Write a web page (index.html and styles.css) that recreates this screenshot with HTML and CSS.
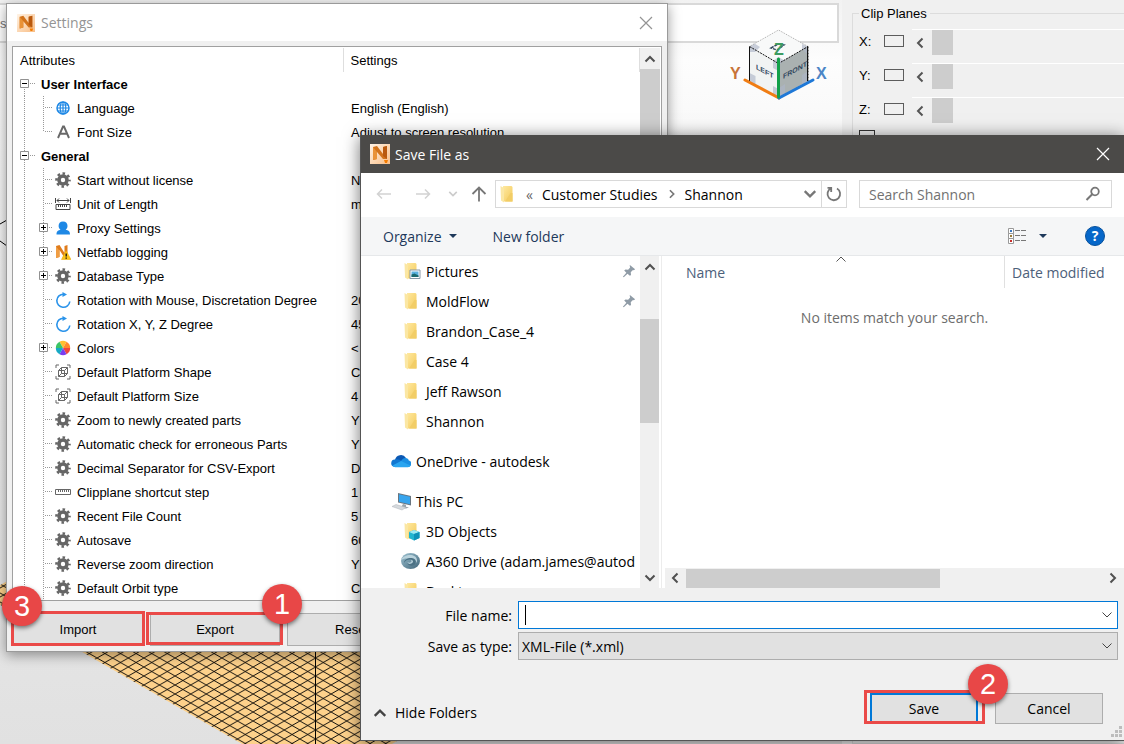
FILE: index.html
```html
<!DOCTYPE html>
<html lang="en">
<head>
<meta charset="utf-8">
<title>Netfabb Settings</title>
<link rel="stylesheet" href="styles.css">
</head>
<body>
<svg class="sprite" aria-hidden="true">
  <defs>
    <linearGradient id="fold" x1="0" y1="0" x2="1" y2="1"><stop offset="0" stop-color="#ffe9a0"/><stop offset="1" stop-color="#f3ca5b"/></linearGradient>
    <linearGradient id="tile" x1="0" y1="0" x2="1" y2="1"><stop offset="0" stop-color="#fff3e6"/><stop offset="1" stop-color="#f8bd85"/></linearGradient>
    <linearGradient id="swirl" x1="0" y1="0" x2="1" y2="1"><stop offset="0" stop-color="#9fc3d2"/><stop offset="1" stop-color="#3f6478"/></linearGradient>
  </defs>
  <symbol id="g-first" viewBox="0 0 42 24"><path d="M11.500 17V24M17 11.500H22" stroke="#999" stroke-dasharray="1 1"/><path d="M7.500 7.500h8v8h-8z" fill="#fff" stroke="#919191"/><path d="M9 11.500h5" stroke="#000"/></symbol>
  <symbol id="g-root" viewBox="0 0 42 24"><path d="M11.500 0V24M17 11.500H22" stroke="#999" stroke-dasharray="1 1"/><path d="M7.500 7.500h8v8h-8z" fill="#fff" stroke="#919191"/><path d="M9 11.500h5" stroke="#000"/></symbol>
  <symbol id="g-leaf" viewBox="0 0 42 24"><path d="M11.500 0V24M30.500 0V24M32 11.500H40" stroke="#999" stroke-dasharray="1 1"/></symbol>
  <symbol id="g-last" viewBox="0 0 42 24"><path d="M11.500 0V24M30.500 0V12M32 11.500H40" stroke="#999" stroke-dasharray="1 1"/></symbol>
  <symbol id="g-plus" viewBox="0 0 42 24"><path d="M11.500 0V24M30.500 0V24M36 11.500H40" stroke="#999" stroke-dasharray="1 1"/><path d="M26.500 7.500h8v8h-8z" fill="#fff" stroke="#919191"/><path d="M28 11.500h5M30.500 9v5" stroke="#000"/></symbol>

  <symbol id="i-gear" viewBox="0 0 16 16"><g fill="none" stroke="#666"><circle cx="8" cy="8" r="4" stroke-width="3.600"/><circle cx="8" cy="8" r="6.500" stroke-width="2.600" stroke-dasharray="2.550 2.555" stroke-dashoffset="1.275"/></g></symbol>
  <symbol id="i-globe" viewBox="0 0 16 16"><circle cx="8" cy="8" r="6" fill="#fff" stroke="#1e88e5" stroke-width="1.500"/><ellipse cx="8" cy="8" rx="2.800" ry="6" fill="none" stroke="#1e88e5" stroke-width="1.200"/><path d="M8 2v12M2 8h12M3 5h10M3 11h10" stroke="#1e88e5" stroke-width="1.200"/></symbol>
  <symbol id="i-font" viewBox="0 0 16 16"><path d="M3 14L8 2.500h1L14 14M5 9.800h7" fill="none" stroke="#686868" stroke-width="1.900"/></symbol>
  <symbol id="i-length" viewBox="0 0 16 16"><path d="M.500 2v5M15.500 2v5M2 4.500h12M4 2.500l-2 2 2 2M12 2.500l2 2-2 2M1 8.500h14v5H1zM3.500 9v2M5.500 9v2M7.500 9v2M9.500 9v2M11.500 9v2" fill="none" stroke="#444"/></symbol>
  <symbol id="i-user" viewBox="0 0 16 16"><path d="M8 1.500c3 0 4.500 2 4.500 4.500 0 1.700-.800 3-1.800 3.800C13 10.300 15 11 15 14.500H1.500c0-3.500 2-4.200 4-4.700C4.500 9 3.600 7.700 3.600 6 3.600 3.500 5 1.500 8 1.500z" fill="#1e88e5"/></symbol>
  <symbol id="i-netlog" viewBox="0 0 16 16"><path d="M1 14V2l3.500-1 5 8V2l3-1v12H9L4.500 6v7z" fill="#df7c1c"/><path d="M1 14V2l3.500 5v6z" fill="#f09d43"/><path d="M11 6.500L16 15.500H6.500z" fill="#fcc419" stroke="#e8a800" stroke-width=".500"/><path d="M11.200 9.500v3M11.200 13.500v1.200" stroke="#111" stroke-width="1.300"/></symbol>
  <symbol id="i-rotate" viewBox="0 0 16 16"><path d="M14.800 9.500A6.500 6.500 0 1 1 8.500 2.200" fill="none" stroke="#2a93ea" stroke-width="1.600"/><path d="M7.500 0L12 2.500 7.500 5z" fill="#2a93ea"/></symbol>
  <symbol id="i-colors" viewBox="0 0 16 16"><path d="M8 8L4.500 1.800a7.200 7.200 0 0 1 7 0z" fill="#ffc02e"/><path d="M8 8l3.500-6.200A7.200 7.200 0 0 1 15.200 8z" fill="#ff8a2a"/><path d="M8 8h7.200a7.200 7.200 0 0 1-3.700 6.200z" fill="#f0453c"/><path d="M8 8l3.500 6.200a7.200 7.200 0 0 1-7 0z" fill="#7a3cf0"/><path d="M8 8l-3.500 6.200A7.200 7.200 0 0 1 .800 8z" fill="#17a9c4"/><path d="M8 8H.800a7.200 7.200 0 0 1 3.700-6.200z" fill="#3cc466"/></symbol>
  <symbol id="i-cube" viewBox="0 0 16 16"><path d="M4 1H1v3M12 1h3v3M4 15H1v-3M12 15h3v-3M3.500 6.500h6v6h-6zM6.500 3.500h6v6h-6zM3.500 6.500l3-3M9.500 6.500l3-3M9.500 12.500l3-3M3.500 12.500l3-3" fill="none" stroke="#666"/></symbol>
  <symbol id="i-ruler" viewBox="0 0 16 16"><path d="M.500 5.500h15v5H.500zM3.500 6v2M5.500 6v2M7.500 6v2M9.500 6v2M11.500 6v2M13.500 6v2" fill="none" stroke="#666"/></symbol>

  <symbol id="i-app" viewBox="0 0 20 20"><path d="M0 0h20v20H0z" fill="url(#tile)"/><path d="M3 16V3l4-1 6 8V3l4-1v13h-4L7 8v7z" fill="#d2731b"/><path d="M3 16V3l4 5v7z" fill="#e99237"/><path d="M13 3l4-1v13l-4-3z" fill="#b9590e"/><path d="M14 16h4l-1 3h-2z" fill="#f57c00"/></symbol>
  <symbol id="i-folder" viewBox="0 0 20 20"><path d="M5 2h8.500l1 1v14.500H5z" fill="url(#fold)"/><path d="M2.500 2L6 4v14.500L3 16.500z" fill="#fbe7a4"/><path d="M12.500 9h2v8.500H7z" fill="#f2cd66"/></symbol>
  <symbol id="i-pictures" viewBox="0 0 20 20"><use href="#i-folder"/><path d="M8 9h10v8.500H8z" fill="#fff" stroke="#8798a8"/><path d="M9.500 10.500h7v5.500h-7z" fill="#5ab0e0"/><path d="M9.500 16v-2.500l3-1 4 2V16z" fill="#1d6a70"/></symbol>
  <symbol id="i-3d" viewBox="0 0 20 20"><use href="#i-folder"/><path d="M7 11l5-2 5.500 2v6L12 19.500 7 17z" fill="#21b5d0"/><path d="M7 11l5-2 5.500 2L12 13z" fill="#9be8f2"/><path d="M12 13l5.500-2v6L12 19.500z" fill="#0d91b8"/></symbol>
  <symbol id="i-cloud" viewBox="0 0 20 20"><path d="M4 9a6 6 0 0 1 11-2l-3 5-8 1z" fill="#0a58b4"/><path d="M4.500 8.500c2-.800 4 .200 6 1.500l3 6H3.500A3.700 3.700 0 0 1 4.500 8.500z" fill="#1177d1"/><path d="M10 10c1.500-2.500 3-3.300 5-3 2 .300 2.500 1.500 2.800 2.500A3.300 3.300 0 0 1 17 16H9z" fill="#1a8fe3"/><path d="M1.500 14.500L10 10l9.500 4.500A3 3 0 0 1 17 16.200H4.200a4 4 0 0 1-2.700-1.700z" fill="#2aa5f0"/></symbol>
  <symbol id="i-pc" viewBox="0 0 20 20"><path d="M7 2l13 3v9.500L7 11.500z" fill="#687580"/><path d="M8 3.200l11 2.600v7.400L8 10.700z" fill="#37a5ee"/><path d="M12 13l3 .800v2l3 .800-3 1-5-1z" fill="#9aa4ac"/><path d="M1 15.500l4-2 10 3-4 2.500z" fill="#d5d9dd" stroke="#aeb5ba" stroke-width=".500"/></symbol>
  <symbol id="i-a360" viewBox="0 0 20 20"><ellipse cx="9.500" cy="10" rx="9.500" ry="8" fill="url(#swirl)"/><path d="M0 9c3-6 15-7 16 0 .500 5-9 6-9.500 2 1.500 1.500 4 .500 4-1 0-3-6-3-10.500-1z" fill="#b9d2dc"/><path d="M3 12c0-6 12-7 12-1 0 4-7 5-8.500 1.500 2 1 5.500 0 5.500-2 0-3-7-3-9 1.500z" fill="#4b7184"/></symbol>
  <symbol id="i-pin" viewBox="0 0 16 16"><path d="M9 1l6 5-1.500 1-1-.200L10 9.500l.300 3L9 13.500 6.300 11 2 15l-1-.500 4-4.500L2.500 7.500 4 6.300l3 .200L9.300 4 8.800 2z" fill="#8f9ba6"/></symbol>
  <symbol id="c-down" viewBox="0 0 12 12"><path d="M1.500 3.500L6 8l4.500-4.500" fill="none" stroke="currentColor" stroke-width="var(--w,2)"/></symbol>
  <symbol id="c-up" viewBox="0 0 12 12"><path d="M1.500 8.500L6 4l4.500 4.500" fill="none" stroke="currentColor" stroke-width="var(--w,2)"/></symbol>
  <symbol id="c-left" viewBox="0 0 12 12"><path d="M8.500 1.500L4 6l4.500 4.500" fill="none" stroke="currentColor" stroke-width="var(--w,2)"/></symbol>
  <symbol id="c-right" viewBox="0 0 12 12"><path d="M3.500 1.500L8 6l-4.500 4.500" fill="none" stroke="currentColor" stroke-width="var(--w,2)"/></symbol>
  <symbol id="c-caret" viewBox="0 0 12 12"><path d="M2 4h8L6 8z" fill="currentColor"/></symbol>
  <symbol id="i-close" viewBox="0 0 14 14"><path d="M1 1l12 12M13 1L1 13" stroke="currentColor" stroke-width="1.200"/></symbol>
</svg>

<div class="desktop">
  <main class="viewport">
    <div class="tool-strip"><span>s</span></div>
    <svg class="scene" width="842" height="744" aria-hidden="true">
      <defs>
        <pattern id="mesh" x="315.500" y="667" width="15.600" height="9" patternUnits="userSpaceOnUse"><path d="M0 0L15.600 9M0 9L15.600 0" stroke="#000" stroke-width=".900"/></pattern>
      </defs>
      <path d="M-17 595L317 787 651 595 317 403z" fill="#fdd18b"/>
      <path d="M-17 595L317 787 651 595 317 403z" fill="url(#mesh)"/>
      <path d="M315.500 403V787" stroke="#000"/>
      <path d="M0 224l7-4M0 241l7 5" stroke="#000"/>
    </svg>
    <svg class="view-cube" width="110" height="80" viewBox="0 0 110 80" role="img" aria-label="View cube">
      <path d="M24.500 21.500L53.500 5l29.500 16.500-29.500 17z" fill="#f8f9f9"/>
      <path d="M24.500 21.500l29 17V73l-29-16z" fill="#f1f3f3"/>
      <path d="M83 21.500l-29.500 17V73L83 56z" fill="#aab1b1"/>
      <path d="M24.500 27v-5.500l5-3 5.500 3.500-5 5zM77 19l6 2.500V30l-6-6zM24.500 48l6 3v9l-6-3zM48 61l5.500 3v9L48 70zM48 36l5.500-4 6 3.500-6 5V46l-5.500-3zM54 63l6-4v9l-6 4zM77 50l6-4v10l-6 4z" fill="#aeb6c8" opacity=".650"/>
      <path d="M24.500 21.500L53.500 5 83 21.500" fill="none" stroke="#aaa" stroke-dasharray="1 1"/>
      <path d="M83 21.500V57L53.500 73l-29-16V21.500l29 17 29.500-17" fill="none" stroke="#111" stroke-dasharray="2 1"/>
      <path d="M24.500 21.500V56M82.500 21.500V56" stroke="#111"/>
      <g class="cube-text"><text transform="matrix(1 .55 0 1 31 44)">LEFT</text><text transform="matrix(1 -.55 0 1 58 54)">FRONT</text></g>
      <path d="M46 23l7-4 6 1-7 5z" fill="none" stroke="#33485e" stroke-width="1.500" stroke-dasharray="3 1"/>
      <path d="M20 55l34 18" stroke="#f07d14" stroke-width="3" stroke-linecap="round"/>
      <path d="M54 73l34-18" stroke="#1e78d7" stroke-width="3" stroke-linecap="round"/>
      <path d="M53.500 34v38" stroke="#12a049" stroke-width="3" stroke-linecap="round"/>
      <g class="axis-text"><text x="49" y="30" fill="#3d9b62">Z</text><text x="5" y="54" fill="#c8743a">Y</text><text x="91" y="54" fill="#4c86c6">X</text></g>
    </svg>
  </main>
  <aside class="side-panel">
    <fieldset class="clip-planes">
      <legend>Clip Planes</legend>
      <div class="clip-row"><span>X:</span><button class="clip-toggle" aria-label="Toggle X plane"></button><div class="clip-slider"><svg class="ic12"><use href="#c-left"/></svg><i></i></div></div>
      <div class="clip-row"><span>Y:</span><button class="clip-toggle" aria-label="Toggle Y plane"></button><div class="clip-slider"><svg class="ic12"><use href="#c-left"/></svg><i></i></div></div>
      <div class="clip-row"><span>Z:</span><button class="clip-toggle" aria-label="Toggle Z plane"></button><div class="clip-slider"><svg class="ic12"><use href="#c-left"/></svg><i></i></div></div>
      <div class="clip-more"></div>
    </fieldset>
  </aside>

  <section class="window settings" aria-label="Settings">
    <header class="settings-title"><svg class="ic18"><use href="#i-app"/></svg><h1>Settings</h1><button class="close" aria-label="Close"><svg class="ic14"><use href="#i-close"/></svg></button></header>
    <div class="list">
      <table class="tree">
        <thead><tr><th class="col-a">Attributes</th><th>Settings</th></tr></thead>
        <tbody>
          <tr class="group"><td><div><svg class="guide"><use href="#g-first"/></svg>User Interface</div></td><td></td></tr>
          <tr><td><div><svg class="guide"><use href="#g-leaf"/></svg><svg class="ic16"><use href="#i-globe"/></svg>Language</div></td><td>English (English)</td></tr>
          <tr><td><div><svg class="guide"><use href="#g-last"/></svg><svg class="ic16"><use href="#i-font"/></svg>Font Size</div></td><td>Adjust to screen resolution</td></tr>
          <tr class="group"><td><div><svg class="guide"><use href="#g-root"/></svg>General</div></td><td></td></tr>
          <tr><td><div><svg class="guide"><use href="#g-leaf"/></svg><svg class="ic16"><use href="#i-gear"/></svg>Start without license</div></td><td>No</td></tr>
          <tr><td><div><svg class="guide"><use href="#g-leaf"/></svg><svg class="ic16"><use href="#i-length"/></svg>Unit of Length</div></td><td>mm</td></tr>
          <tr><td><div><svg class="guide"><use href="#g-plus"/></svg><svg class="ic16"><use href="#i-user"/></svg>Proxy Settings</div></td><td></td></tr>
          <tr><td><div><svg class="guide"><use href="#g-plus"/></svg><svg class="ic16"><use href="#i-netlog"/></svg>Netfabb logging</div></td><td></td></tr>
          <tr><td><div><svg class="guide"><use href="#g-plus"/></svg><svg class="ic16"><use href="#i-gear"/></svg>Database Type</div></td><td></td></tr>
          <tr><td><div><svg class="guide"><use href="#g-leaf"/></svg><svg class="ic16"><use href="#i-rotate"/></svg>Rotation with Mouse, Discretation Degree</div></td><td>20</td></tr>
          <tr><td><div><svg class="guide"><use href="#g-leaf"/></svg><svg class="ic16"><use href="#i-rotate"/></svg>Rotation X, Y, Z Degree</div></td><td>45</td></tr>
          <tr><td><div><svg class="guide"><use href="#g-plus"/></svg><svg class="ic16"><use href="#i-colors"/></svg>Colors</div></td><td>&lt;</td></tr>
          <tr><td><div><svg class="guide"><use href="#g-leaf"/></svg><svg class="ic16"><use href="#i-cube"/></svg>Default Platform Shape</div></td><td>C</td></tr>
          <tr><td><div><svg class="guide"><use href="#g-leaf"/></svg><svg class="ic16"><use href="#i-cube"/></svg>Default Platform Size</div></td><td>4</td></tr>
          <tr><td><div><svg class="guide"><use href="#g-leaf"/></svg><svg class="ic16"><use href="#i-gear"/></svg>Zoom to newly created parts</div></td><td>Y</td></tr>
          <tr><td><div><svg class="guide"><use href="#g-leaf"/></svg><svg class="ic16"><use href="#i-gear"/></svg>Automatic check for erroneous Parts</div></td><td>Y</td></tr>
          <tr><td><div><svg class="guide"><use href="#g-leaf"/></svg><svg class="ic16"><use href="#i-gear"/></svg>Decimal Separator for CSV-Export</div></td><td>D</td></tr>
          <tr><td><div><svg class="guide"><use href="#g-leaf"/></svg><svg class="ic16"><use href="#i-ruler"/></svg>Clipplane shortcut step</div></td><td>1</td></tr>
          <tr><td><div><svg class="guide"><use href="#g-leaf"/></svg><svg class="ic16"><use href="#i-gear"/></svg>Recent File Count</div></td><td>5</td></tr>
          <tr><td><div><svg class="guide"><use href="#g-leaf"/></svg><svg class="ic16"><use href="#i-gear"/></svg>Autosave</div></td><td>60</td></tr>
          <tr><td><div><svg class="guide"><use href="#g-leaf"/></svg><svg class="ic16"><use href="#i-gear"/></svg>Reverse zoom direction</div></td><td>Y</td></tr>
          <tr><td><div><svg class="guide"><use href="#g-leaf"/></svg><svg class="ic16"><use href="#i-gear"/></svg>Default Orbit type</div></td><td>C</td></tr>
        </tbody>
      </table>
      <div class="vbar"><svg class="ic12"><use href="#c-up"/></svg><i class="thumb-fill"></i></div>
    </div>
    <footer class="settings-actions">
      <div class="callout import"><button class="btn">Import</button><b class="badge">3</b></div>
      <div class="callout export"><button class="btn">Export</button><b class="badge">1</b></div>
      <button class="btn">Reset</button>
    </footer>
  </section>

  <section class="window dialog" aria-label="Save File as">
    <header class="dialog-title"><svg class="ic20"><use href="#i-app"/></svg><h2>Save File as</h2><button class="close" aria-label="Close"><svg class="ic14"><use href="#i-close"/></svg></button></header>
    <nav class="path-bar">
      <button class="nav-btn" aria-label="Back"><svg class="ic16" viewBox="0 0 16 16"><path d="M15 8H1.500M6 3.500L1.500 8 6 12.500" fill="none" stroke="#d2d2d2" stroke-width="1.500"/></svg></button>
      <button class="nav-btn forward" aria-label="Forward"><svg class="ic16" viewBox="0 0 16 16"><path d="M1 8h13.500M10 3.500L14.500 8 10 12.500" fill="none" stroke="#d2d2d2" stroke-width="1.500"/></svg></button>
      <button class="nav-btn recent" aria-label="Recent locations"><svg class="ic10"><use href="#c-down"/></svg></button>
      <button class="nav-btn" aria-label="Up"><svg class="ic16" viewBox="0 0 16 16"><path d="M8 15.500V1.500M1.500 8L8 1.500 14.500 8" fill="none" stroke="#777" stroke-width="1.800"/></svg></button>
      <div class="address">
        <svg class="ic20"><use href="#i-folder"/></svg><span class="more">«</span><a href="#">Customer Studies</a><svg class="ic10 crumb"><use href="#c-right"/></svg><a href="#">Shannon</a>
        <button class="drop" aria-label="Previous locations"><svg class="ic14"><use href="#c-down"/></svg></button>
        <button class="refresh" aria-label="Refresh"><svg class="ic16" viewBox="0 0 16 16"><path d="M11 2.500A6.300 6.300 0 1 1 5 2.300M5.200 6V1.800H1.500" fill="none" stroke="#777" stroke-width="1.800"/></svg></button>
      </div>
      <label class="search"><input type="text" placeholder="Search Shannon" aria-label="Search Shannon"><svg class="ic16" viewBox="0 0 16 16"><circle cx="10" cy="5.500" r="3.800" fill="none" stroke="#777" stroke-width="1.800"/><path d="M7.200 8.300L1.500 14" stroke="#777" stroke-width="2"/></svg></label>
    </nav>
    <div class="command-bar">
      <button class="cmd">Organize<svg class="ic12"><use href="#c-caret"/></svg></button>
      <button class="cmd">New folder</button>
      <button class="views" aria-label="Change view"><svg width="20" height="18" viewBox="0 0 20 18"><path d="M1.500 1.500h5v5h-5zM1.500 6.500h5v5h-5zM1.500 11.500h5v5h-5z" fill="#fff" stroke="#999"/><path d="M3 3h2v2H3z" fill="#3c78c0"/><path d="M3 8h2v2H3z" fill="#9a7a35"/><path d="M3 13h2v2H3z" fill="#c9302c"/><path d="M8 3.500h5M14 3.500h5M8 8.500h5M14 8.500h5M8 13.500h5M14 13.500h5" stroke="#777"/></svg><svg class="ic12"><use href="#c-caret"/></svg></button>
      <button class="help" aria-label="Help">?</button>
    </div>
    <div class="browser">
      <div class="places">
        <ul>
          <li><svg class="ic20"><use href="#i-pictures"/></svg>Pictures<svg class="ic14 pin"><use href="#i-pin"/></svg></li>
          <li><svg class="ic20"><use href="#i-folder"/></svg>MoldFlow<svg class="ic14 pin"><use href="#i-pin"/></svg></li>
          <li><svg class="ic20"><use href="#i-folder"/></svg>Brandon_Case_4</li>
          <li><svg class="ic20"><use href="#i-folder"/></svg>Case 4</li>
          <li><svg class="ic20"><use href="#i-folder"/></svg>Jeff Rawson</li>
          <li><svg class="ic20"><use href="#i-folder"/></svg>Shannon</li>
          <li class="top"><svg class="ic20"><use href="#i-cloud"/></svg>OneDrive - autodesk</li>
          <li class="top"><svg class="ic20"><use href="#i-pc"/></svg>This PC</li>
          <li><svg class="ic20"><use href="#i-3d"/></svg>3D Objects</li>
          <li class="drive"><svg class="ic20"><use href="#i-a360"/></svg>A360 Drive (adam.james@autod</li>
          <li><svg class="ic20"><use href="#i-folder"/></svg>Desktop</li>
        </ul>
      </div>
      <div class="vbar places-bar"><svg class="ic12"><use href="#c-up"/></svg><i></i><svg class="ic12"><use href="#c-down"/></svg></div>
      <div class="files">
        <div class="columns"><button class="col-name">Name<svg class="ic12 sort"><use href="#c-up"/></svg></button><button class="col-date">Date modified</button></div>
        <p>No items match your search.</p>
        <div class="hbar"><svg class="ic12"><use href="#c-left"/></svg><i></i><svg class="ic12"><use href="#c-right"/></svg></div>
      </div>
    </div>
    <footer class="dialog-footer">
      <div class="fields">
        <label for="fname">File name:</label>
        <div class="combo"><input id="fname" type="text"><i class="text-caret"></i><svg class="ic12 chev"><use href="#c-down"/></svg></div>
        <label for="ftype">Save as type:</label>
        <div class="combo"><select id="ftype"><option>XML-File (*.xml)</option></select><svg class="ic12 chev"><use href="#c-down"/></svg></div>
      </div>
      <div class="dialog-actions">
        <button class="hide"><svg class="ic14"><use href="#c-up"/></svg>Hide Folders</button>
        <div class="callout save"><button class="btn2 primary">Save</button><b class="badge">2</b></div>
        <button class="btn2">Cancel</button>
      </div>
      <svg class="grip" width="12" height="12" viewBox="0 0 12 12"><path d="M9 0h3v3H9zM5 4h3v3H5zM9 4h3v3H9zM1 8h3v3H1zM5 8h3v3H5zM9 8h3v3H9z" fill="#bdbdbd"/></svg>
    </footer>
  </section>
</div>
</body>
</html>
```

FILE: styles.css
```css
* { box-sizing: border-box; }
body { margin: 0; font-family: "Liberation Sans", Arial, sans-serif; font-size: 13px; color: #000; }
h1, h2, p, ul { margin: 0; padding: 0; font-weight: normal; }
ul { list-style: none; }
button, input, select { font: inherit; color: inherit; border: 0; background: none; padding: 0; margin: 0; border-radius: 0; }
a { color: inherit; text-decoration: none; }
svg { flex: none; display: block; }
i { display: block; }
.sprite { position: absolute; width: 0; height: 0; }
.ic10 { width: 10px; height: 10px; }
.ic12 { width: 12px; height: 12px; }
.ic14 { width: 14px; height: 14px; }
.ic16 { width: 16px; height: 16px; }
.ic18 { width: 18px; height: 18px; }
.ic20 { width: 20px; height: 20px; }

.desktop { position: relative; display: flex; min-height: 100vh; overflow: hidden; }
.viewport { position: relative; flex: 1; padding: 3px 3px 0 0; background: linear-gradient(#f2f2f2 0, #fdfdfd 60px, #f4f4f4 200px, #e9e9e9 480px, #e1e1e1 100%); }
.tool-strip { height: 40px; display: flex; align-items: center; border: 2px solid #d9d9d9; border-left: 0; background: #fff; color: #777; }
.scene { position: absolute; left: 0; top: 0; }
.view-cube { position: absolute; right: 7px; top: 25px; }
.cube-text { font-size: 7px; font-weight: bold; fill: #33485e; }
.axis-text { font-size: 16px; font-weight: bold; }

.side-panel { width: 282px; padding: 6px 0 0 10px; background: #f0f0f0; overflow: hidden; }
.clip-planes { margin: 0 -4px 0 0; height: 100%; padding: 4px 0 0 6px; border: 1px solid #dcdcdc; min-width: 0; }
.clip-planes legend { padding: 0 3px 0 2px; line-height: 15px; }
.clip-row { display: flex; align-items: center; height: 34px; }
.clip-row span { width: 25px; margin-bottom: 2px; }
.clip-toggle { width: 20px; height: 12px; border: 1px solid #5c5c5c; margin: 0 8px 3px 0; }
.clip-slider { flex: 1; display: flex; align-items: center; height: 26px; gap: 6px; padding-left: 2px; border-top: 1px solid #fff; color: #555; }
.clip-slider i { width: 21px; height: 25px; background: #cdcdcd; }
.clip-more { width: 16px; height: 13px; margin-top: 3px; border: 1px solid #333; }

.window { position: absolute; display: flex; flex-direction: column; background: #f0f0f0; }
.settings { left: 6px; top: 3px; width: 662px; border: 1px solid #9a9a9a; box-shadow: 0 3px 12px rgba(0, 0, 0, .4); }
.settings-title { height: 37px; display: flex; align-items: center; gap: 6px; padding: 0 14px 0 10px; background: #fff; color: #949494; font: 14px "Open Sans", sans-serif; }
.settings-title h1, .dialog-title h2 { font-size: 14px; }
.close { margin-left: auto; }
.list { display: flex; margin: 5px 5px 0; padding: 1px 1px 0 0; border: 1px solid #a0a0a0; background: #fff; }
.tree { flex: 1; table-layout: fixed; border-collapse: collapse; }
.tree th, .tree td { height: 24px; padding: 0 0 0 8px; text-align: left; font-weight: normal; white-space: nowrap; }
.tree th { border-right: 1px solid #dedede; padding-left: 7px; }
.tree .col-a { width: 330px; }
.tree td:first-child { padding: 0; }
.tree td div { display: flex; align-items: center; height: 24px; gap: 6px; }
.tree td .guide { width: 42px; height: 24px; margin-right: -6px; }
.tree td .ic16 + * { margin-left: 1px; }
.tree .group div { gap: 0; font-weight: bold; }
.tree .group .guide { margin-right: -14px; }
.vbar { width: 20px; display: flex; flex-direction: column; align-items: center; background: #f0f0f0; color: #505050; }
.vbar .ic12 { margin: 5px 0 4px; }
.thumb-fill { flex: 1; align-self: stretch; background: #cdcdcd; }
.settings-actions { display: flex; gap: 7px; padding: 12px 6px 5px; }
.btn { width: 130px; height: 33px; border: 1px solid #adadad; background: #e1e1e1; }
.callout { position: relative; display: flex; }
.callout::after { content: ""; position: absolute; inset: -2px -2px 0; border: 3px solid #ea4a48; }
.export::after { inset: -1px -3px 1px -4px; }
.badge { position: absolute; z-index: 1; width: 40px; height: 40px; border-radius: 50%; background: #e84747; color: #fff; font: 29px/40px "Liberation Sans", Arial, sans-serif; text-align: center; box-shadow: 0 2px 4px rgba(0, 0, 0, .5); }
.import .badge { left: -11px; top: -27px; }
.export .badge { right: -22px; top: -29px; }
.save .badge { right: -30px; top: -29px; }

.dialog { left: 360px; right: 0; top: 135px; bottom: 3px; border: solid #555; border-width: 0 0 1px 1px; box-shadow: 0 2px 16px rgba(0, 0, 0, .55); font: 14px "Open Sans", sans-serif; }
.dialog-title { height: 38px; display: flex; align-items: center; gap: 5px; padding: 0 14px 0 9px; background: #4b4a48; color: #fff; }
.path-bar { height: 44px; display: flex; align-items: center; padding: 0 12px 2px 15px; background: #fff; }
.nav-btn { margin-right: 13px; }
.nav-btn:first-child { margin-right: 23px; }
.forward { margin-right: 17px; }
.recent { color: #ccc; }
.nav-btn:nth-child(4) { margin-right: 8px; }
.address { flex: 352 1 352px; display: flex; align-items: center; height: 28px; margin-right: 12px; border: 1px solid #d9d9d9; padding-left: 2px; min-width: 0; white-space: nowrap; }
.more { margin: 0 9px 0 8px; color: #666; }
.crumb { margin: 0 8px 0 9px; color: #777; }
.drop { margin-left: auto; padding: 0 4px; color: #777; }
.refresh { height: 26px; width: 25px; padding-left: 4px; border-left: 1px solid #d9d9d9; }
.search { flex: 253 1 253px; height: 28px; display: flex; align-items: center; border: 1px solid #d9d9d9; padding: 0 10px 0 9px; min-width: 0; }
.search input { flex: 1; min-width: 0; outline: 0; }
.search input::placeholder { color: #717171; opacity: 1; }
.command-bar { height: 39px; display: flex; align-items: center; padding: 0 19px 0 22px; background: #f5f6f7; border-bottom: 1px solid #e6e8ea; color: #1e395b; }
.cmd { display: flex; align-items: center; gap: 5px; margin-right: 34px; }
.views { display: flex; align-items: center; gap: 10px; margin-left: auto; margin-right: 36px; }
.help { width: 20px; height: 20px; border-radius: 50%; background: #0667c9; border: 1px solid #07519c; color: #fff; font-weight: bold; line-height: 16px; }
.browser { flex: 1; display: flex; min-height: 0; background: #fff; }
.places { width: 279px; overflow: hidden; }
.places li { height: 30px; display: flex; align-items: center; gap: 4px; padding-left: 41px; white-space: nowrap; }
.places .top { margin-top: 10px; padding-left: 30px; gap: 5px; }
.places .drive { padding-left: 40px; gap: 5px; }
.pin { margin: 0 4px 0 auto; }
.places-bar { width: 19px; }
.places-bar i { align-self: stretch; height: 104px; margin-top: 42px; background: #cdcdcd; }
.places-bar svg:last-child { margin-top: auto; }
.files { flex: 1; display: flex; flex-direction: column; margin-left: 2px; border-left: 1px solid #ececec; padding-left: 3px; min-width: 0; }
.columns { display: flex; height: 32px; color: #4c607a; }
.col-name { position: relative; flex: 1; padding: 0 0 0 21px; text-align: left; }
.sort { --w: 1; position: absolute; left: 50%; top: -3px; color: #555; }
.col-date { width: 120px; padding: 0 0 0 7px; border-left: 1px solid #e0e0e0; text-align: left; white-space: nowrap; }
.files p { margin-top: 20px; text-align: center; color: #6d6d6d; }
.hbar { display: flex; align-items: center; height: 20px; margin-top: auto; background: #f0f0f0; color: #505050; padding: 0 5px 0 4px; }
.hbar i { width: 254px; height: 19px; margin: 0 auto 0 5px; background: #cdcdcd; }
.dialog-footer { position: relative; padding: 13px 6px 16px; }
.fields { display: grid; grid-template-columns: 145px 1fr; gap: 3px 6px; align-items: center; }
.fields label { text-align: right; }
.combo { position: relative; display: flex; align-items: center; }
.combo input, .combo select { width: 100%; height: 28px; outline: 0; }
.combo input { border: 1px solid #0078d7; background: #fff; padding: 0 20px 0 5px; }
.combo select { appearance: none; border: 1px solid #adadad; background: #e1e1e1; padding: 0 20px 0 3px; }
.text-caret { position: absolute; left: 7px; top: 4px; width: 1px; height: 20px; background: #000; }
.chev { --w: 1; position: absolute; right: 5px; color: #444; }
.dialog-actions { display: flex; align-items: center; margin-top: 33px; padding-right: 15px; }
.hide { display: flex; align-items: center; gap: 8px; margin: 8px auto 0 6px; }
.hide svg { color: #444; }
.btn2 { width: 108px; height: 31px; border: 1px solid #adadad; background: #e1e1e1; }
.primary { border: 2px solid #0078d7; }
.save { margin-right: 17px; }
.save::after { inset: -3px -7px 0 -6px; }
.grip { position: absolute; right: 2px; bottom: 2px; }
```
